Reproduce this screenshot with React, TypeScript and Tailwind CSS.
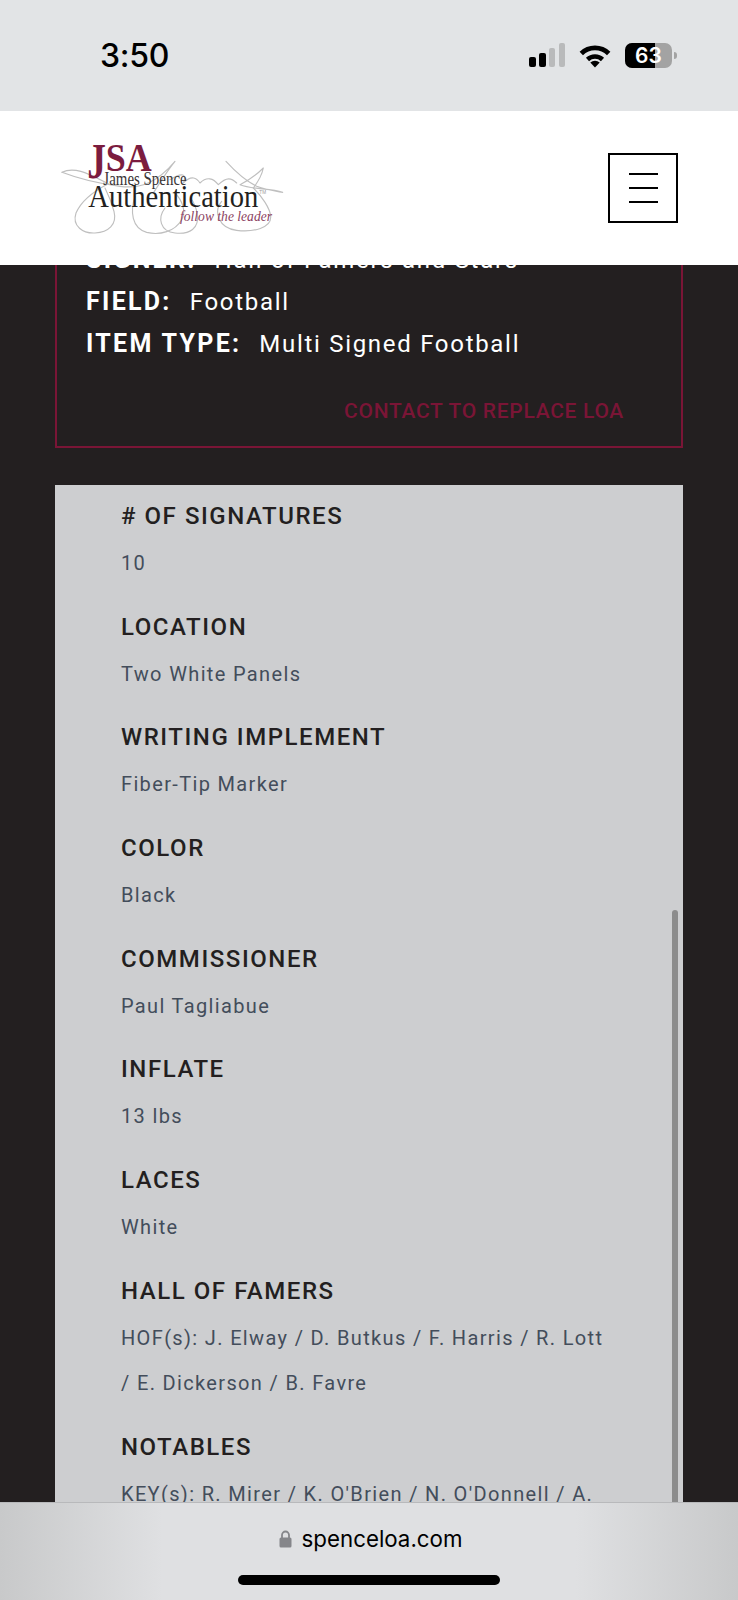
const body = "[font-family:Roboto,'Liberation_Sans',sans-serif]";

const rows: [string, string][] = [
  ["# OF SIGNATURES", "10"],
  ["LOCATION", "Two White Panels"],
  ["WRITING IMPLEMENT", "Fiber-Tip Marker"],
  ["COLOR", "Black"],
  ["COMMISSIONER", "Paul Tagliabue"],
  ["INFLATE", "13 lbs"],
  ["LACES", "White"],
  ["HALL OF FAMERS", "HOF(s): J. Elway / D. Butkus / F. Harris / R. Lott / E. Dickerson / B. Favre"],
  ["NOTABLES", "KEY(s): R. Mirer / K. O'Brien / N. O'Donnell / A. Smith / D. Marino"],
];

function Logo() {
  return (
    <svg width="260" height="110" viewBox="0 0 780 330" className="shrink-0">
      <g fill="none" stroke="#bfbfbf" strokeWidth="3.4" strokeLinecap="round" strokeLinejoin="round">
        <path d="M66 118 C105 98 150 125 205 152 C170 170 125 200 108 240 C95 280 130 302 165 300 C205 298 232 275 222 235 C214 205 205 185 195 165" />
        <path d="M285 190 C270 235 275 285 320 298 C360 308 405 295 425 260 C440 235 425 200 405 180" />
        <path d="M375 225 C352 255 360 295 405 300 C450 305 478 285 472 245 C468 220 460 205 452 195" />
        <path d="M545 205 C520 235 535 285 590 292 C640 298 695 285 692 250 C690 225 665 190 640 165" />
        <path d="M66 118 C110 135 160 150 240 160 C300 168 350 150 405 85 C380 115 350 165 340 180" />
        <path d="M390 140 C430 115 440 125 430 150 C455 125 470 135 480 150 C500 130 520 135 535 155 C560 130 575 135 590 150" />
        <path d="M558 85 C590 120 620 145 650 160 C680 172 710 175 728 178 C690 165 640 170 600 155 C630 140 660 115 670 105 C665 130 655 145 640 165" />
      </g>
      <text x="142" y="136" fill="#7b1c3f" textLength="56" lengthAdjust="spacingAndGlyphs" className="[font-family:'Liberation_Serif',serif] font-bold text-[150px]">J</text>
      <text x="197" y="113" fill="#7b1c3f" textLength="138" lengthAdjust="spacingAndGlyphs" className="[font-family:'Liberation_Serif',serif] font-bold text-[118px]">SA</text>
      <text x="190" y="155" fill="#3a3536" textLength="250" lengthAdjust="spacingAndGlyphs" className="[font-family:'Liberation_Serif',serif] text-[54px]">James Spence</text>
      <text x="145" y="222" fill="#231f20" textLength="510" lengthAdjust="spacingAndGlyphs" className="[font-family:'Liberation_Serif',serif] text-[96px]">Authentication</text>
      <text x="658" y="184" fill="#9a9a9a" className="[font-family:'Liberation_Sans',sans-serif] text-[14px]">TM</text>
      <text x="420" y="264" fill="#8b3f5f" textLength="276" lengthAdjust="spacingAndGlyphs" className="[font-family:'Liberation_Serif',serif] italic text-[44px]">follow the leader</text>
    </svg>
  );
}

function StatusIcons() {
  return (
    <div className="flex items-center">
      <svg width="37" height="25" viewBox="0 0 37 25">
        <rect x="0" y="14" width="7" height="10" rx="2" fill="#000" />
        <rect x="10" y="10" width="7" height="14" rx="2" fill="#000" />
        <rect x="20" y="5" width="6" height="19" rx="2" fill="#b9babb" />
        <rect x="30" y="0" width="6" height="24" rx="2" fill="#b9babb" />
      </svg>
      <svg width="32" height="24" viewBox="0 0 31 24" className="ml-[13px]">
        <path d="M1.8 9.5 A19.5 19.5 0 0 1 29.2 9.5" fill="none" stroke="#000" strokeWidth="4.8" />
        <path d="M8 15.5 A11 11 0 0 1 23 15.5" fill="none" stroke="#000" strokeWidth="4.6" />
        <path d="M15.5 23.5 L10.8 18.6 A7 7 0 0 1 20.2 18.6 Z" fill="#000" />
      </svg>
      <div className="relative ml-[14px] flex h-[25px] w-[47px] overflow-hidden rounded-[7px] bg-[#a3a3a3]">
        <div className="h-full w-[30px] bg-black" />
        <span className="absolute inset-0 flex items-center justify-center text-[21px] font-semibold leading-none text-white [font-family:Inter,sans-serif]">63</span>
      </div>
      <div className="ml-[2px] h-[7px] w-[3px] rounded-r-full bg-[#a3a3a3]" />
    </div>
  );
}

export default function App() {
  return (
    <div className={`flex h-[1600px] w-[738px] flex-col overflow-hidden bg-[#231f20] ${body}`}>
      <div className="flex h-[111px] shrink-0 items-center justify-between bg-[#e2e4e6] pl-[100px] pr-[61px]">
        <span className="text-[32px] font-medium leading-none tracking-[-0.3px] text-black [font-family:Inter,sans-serif]">3:50</span>
        <StatusIcons />
      </div>

      <header className="flex h-[154px] shrink-0 items-center justify-between bg-white pl-[40px] pr-[60px]">
        <Logo />
        <button className="flex h-[70px] w-[70px] flex-col items-center justify-center gap-[12px] border-2 border-black">
          <span className="h-[2px] w-[29px] bg-black" />
          <span className="h-[2px] w-[29px] bg-black" />
          <span className="h-[2px] w-[29px] bg-black" />
        </button>
      </header>

      <main className="relative min-h-0 flex-1 overflow-hidden">
        <section className="-mt-[26px] ml-[55px] w-[628px] border-x-2 border-b-2 border-[#7a1536] pl-[29px] pr-[57px]">
          {[
            ["SIGNER:", "Hall of Famers and Stars"],
            ["FIELD:", "Football"],
            ["ITEM TYPE:", "Multi Signed Football"],
          ].map(([k, v]) => (
            <div key={k} className="whitespace-nowrap text-[24px] leading-[42px] tracking-[1.7px] text-white">
              <span className="text-[25px] font-bold tracking-[2.3px]">{k}</span>
              <span className="ml-[18px]">{v}</span>
            </div>
          ))}
          <div className="mb-[20px] mt-[31px] text-right text-[21px] font-medium leading-[30px] tracking-[0.7px] text-[#7a1536]">
            CONTACT TO REPLACE LOA
          </div>
        </section>

        <section className="relative ml-[55px] mt-[37px] w-[628px] bg-[#cdced0] pb-[40px] pl-[66px] pr-[75px] pt-[15px]">
          {rows.map(([label, value]) => (
            <div key={label} className="mb-[24.7px]">
              <div className="mb-[9px] text-[24px] font-medium leading-[32px] tracking-[1.55px] text-[#231f20]">{label}</div>
              <div className="text-[20px] leading-[45px] tracking-[1.35px] text-[#434d5b]">{value}</div>
            </div>
          ))}
          <div className="absolute bottom-0 right-[5px] top-[425px] w-[6px] rounded-full bg-[#8c8c8c]" />
        </section>
      </main>

      <footer className="flex h-[98px] shrink-0 flex-col items-center border-t border-[#b8b9bb] bg-[linear-gradient(90deg,#c8c9ca_0%,#dfe0e2_22%,#dfe0e2_78%,#c8c9ca_100%)]">
        <div className="ml-[3px] mt-[22px] flex items-center">
          <svg width="13" height="18" viewBox="0 0 13 18" className="mr-[10px]">
            <path d="M3 8 V5 A3.5 3.5 0 0 1 10 5 V8" fill="none" stroke="#85868a" strokeWidth="1.8" />
            <rect x="0.5" y="7.5" width="12" height="10" rx="1.5" fill="#85868a" />
          </svg>
          <span className="text-[22.3px] leading-[28px] text-black [font-family:Inter,sans-serif]">spenceloa.com</span>
        </div>
        <div className="mt-[22px] h-[10px] w-[262px] rounded-full bg-black" />
      </footer>
    </div>
  );
}
